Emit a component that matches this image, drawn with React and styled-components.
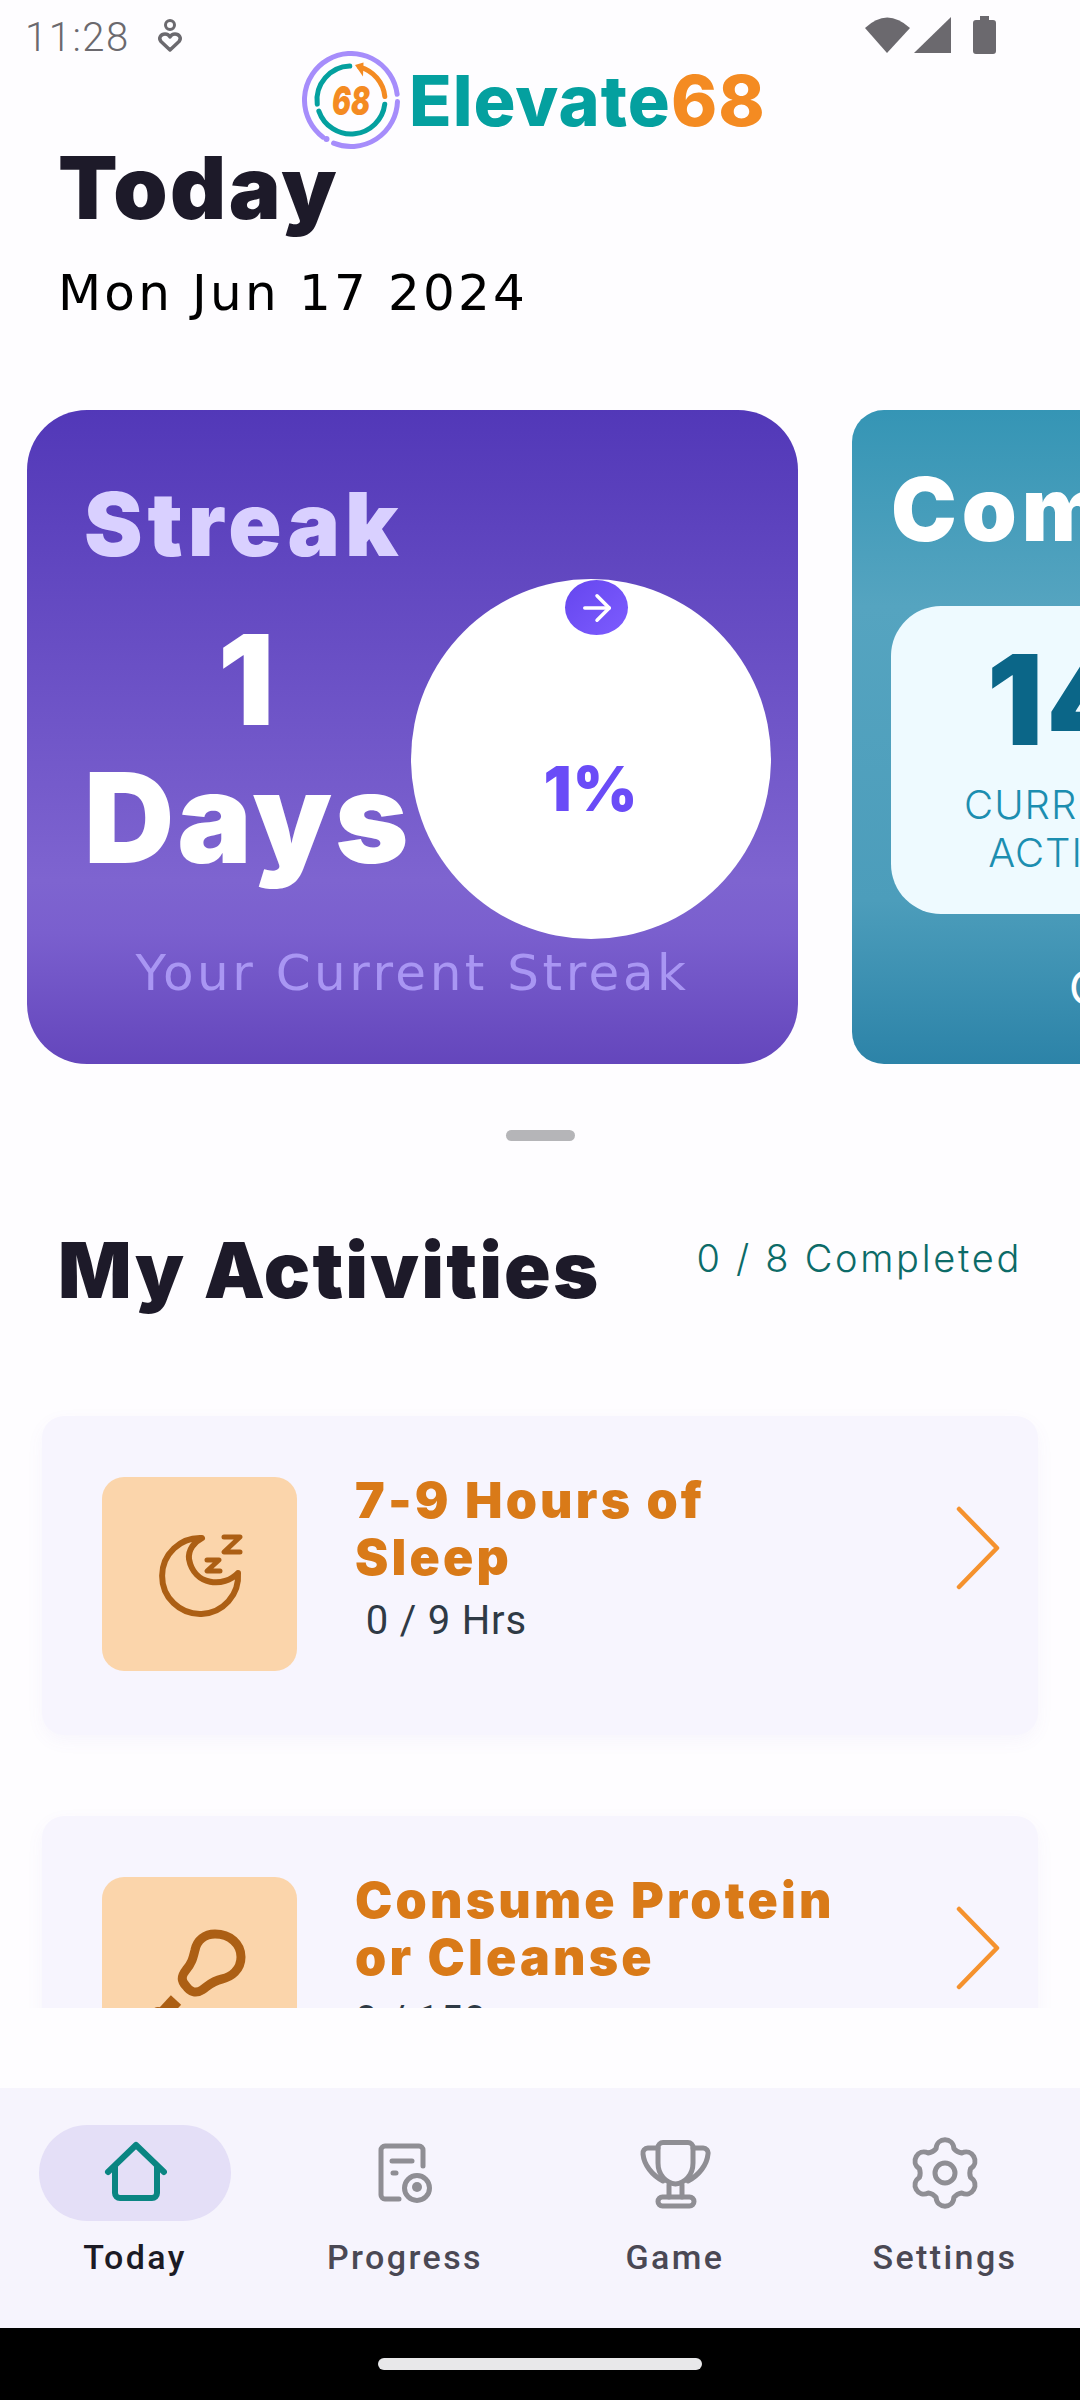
import React from 'react';
import styled, { createGlobalStyle } from 'styled-components';
import { ArrowRight } from 'lucide-react';

const GlobalStyle = createGlobalStyle`
  html, body {
    margin: 0;
    padding: 0;
    background: #fefdff;
  }
  * {
    box-sizing: border-box;
  }
`;

const Screen = styled.div`
  width: 1080px;
  height: 2400px;
  display: flex;
  flex-direction: column;
  overflow: hidden;
  background: #fefdff;
  font-family: Inter, 'Liberation Sans', sans-serif;
`;

const Main = styled.main`
  height: 2008px;
  overflow: hidden;
  flex-shrink: 0;
`;

const StatusBar = styled.div`
  height: 51px;
  display: flex;
  align-items: flex-start;
  padding: 16px 84px 0 25px;
  color: #6b696e;
`;

const Clock = styled.span`
  font-family: Roboto, sans-serif;
  font-weight: 300;
  font-size: 40px;
  line-height: 44px;
  letter-spacing: 1.5px;
  margin-right: 26px;
`;

const StatusLeftIcon = styled.svg`
  margin-top: 2px;
`;

const StatusRight = styled.div`
  margin-left: auto;
  display: flex;
  align-items: flex-start;
`;

const LogoRow = styled.div`
  height: 98px;
  display: flex;
  align-items: center;
  gap: 9px;
  padding-left: 302px;
`;

const LogoText = styled.div`
  font-size: 70px;
  line-height: 80px;
  font-weight: 800;
  letter-spacing: 1px;
  color: #04a09f;
  margin-top: 2px;

  span {
    color: #f48b22;
  }
`;

const PageHead = styled.header`
  padding-left: 58px;
  margin-bottom: 87px;
`;

const PageTitle = styled.h1`
  margin: 0;
  font-size: 87px;
  line-height: 78px;
  font-weight: 900;
  letter-spacing: 2.4px;
  color: #1d1a29;
`;

const PageDate = styled.div`
  margin-top: 36px;
  font-family: 'DejaVu Sans', sans-serif;
  font-size: 50px;
  line-height: 60px;
  font-weight: 400;
  letter-spacing: 3.2px;
  color: #000;
  white-space: nowrap;
`;

const Carousel = styled.section`
  display: flex;
  gap: 54px;
  padding-left: 27px;
  width: 1080px;
  overflow: hidden;
`;

const SlideCard = styled.div`
  flex: 0 0 771px;
  height: 654px;
  border-radius: ${(p) => p.$radius}px;
  background: ${(p) => p.$bg};
`;

const StreakCard = styled(SlideCard)`
  padding: 70px 27px 0 57px;
`;

const CompleteCard = styled(SlideCard)`
  padding: 55px 39px 0;
`;

const CardHeading = styled.h2`
  margin: 0;
  font-size: 88px;
  line-height: 88px;
  font-weight: 900;
  letter-spacing: 5px;
  color: ${(p) => p.$color};
`;

const StreakRow = styled.div`
  display: flex;
  margin-top: 11px;
`;

const DaysBlock = styled.div`
  width: 327px;
  margin-top: 32px;
  text-align: center;
  font-size: 125px;
  line-height: 138px;
  font-weight: 900;
  letter-spacing: 3px;
  color: #fff;
  white-space: nowrap;
`;

const ProgressCircle = styled.div`
  position: relative;
  width: 360px;
  height: 360px;
  flex-shrink: 0;
  border-radius: 50%;
  background: #fff;
  display: flex;
  align-items: center;
  justify-content: center;
  padding-top: 60px;
`;

const ProgressBadge = styled.div`
  position: absolute;
  top: 1px;
  left: 154px;
  width: 63px;
  height: 55px;
  border-radius: 50%;
  background: linear-gradient(135deg, #6546ee, #7d5cff);
  color: #fff;
  display: flex;
  align-items: center;
  justify-content: center;
`;

const ProgressValue = styled.div`
  font-size: 62px;
  line-height: 70px;
  font-weight: 900;
  letter-spacing: 1px;
  color: #6a4cf7;
`;

const StreakCaption = styled.div`
  margin: 4px 0 0 -30px;
  text-align: center;
  font-family: 'DejaVu Sans', sans-serif;
  font-size: 50px;
  line-height: 60px;
  letter-spacing: 3.5px;
  color: #a996f3;
  white-space: nowrap;
`;

const CountPanel = styled.div`
  margin-top: 53px;
  width: 342px;
  height: 308px;
  padding-top: 29px;
  border-radius: 50px;
  background: #eefaff;
  text-align: center;
`;

const CountValue = styled.div`
  font-size: 125px;
  line-height: 130px;
  font-weight: 900;
  letter-spacing: 3px;
  color: #0b6688;
`;

const CountLabel = styled.div`
  margin-top: 16px;
  font-size: 40px;
  line-height: 48px;
  font-weight: 300;
  letter-spacing: 1px;
  color: #1c8eb0;
`;

const CompleteCaption = styled.div`
  margin: 46px 0 0 62px;
  text-align: center;
  font-size: 48px;
  line-height: 56px;
  font-weight: 400;
  color: #fff;
  white-space: nowrap;
`;

const DragHandle = styled.div`
  width: 69px;
  height: 11px;
  margin: 66px auto 84px;
  border-radius: 6px;
  background: #b5b5b8;
`;

const SectionRow = styled.div`
  display: flex;
  justify-content: space-between;
  align-items: flex-start;
  padding: 0 58px;
  margin-bottom: 101px;
`;

const SectionTitle = styled.h2`
  margin: 0;
  font-size: 77px;
  line-height: 90px;
  font-weight: 900;
  letter-spacing: 2.2px;
  color: #1d1a29;
`;

const SectionCount = styled.div`
  margin-top: 10px;
  font-size: 38px;
  line-height: 46px;
  font-weight: 300;
  letter-spacing: 2.7px;
  color: #0c6b68;
`;

const ActivityList = styled.div`
  display: flex;
  flex-direction: column;
  gap: 81px;
  padding: 0 42px;
`;

const ActivityCard = styled.article`
  display: flex;
  height: 319px;
  padding: 61px 38px 0 60px;
  border-radius: 22px;
  background: #f7f5fe;
  box-shadow: 0 6px 18px rgba(120, 100, 200, 0.05);
`;

const IconTile = styled.div`
  flex: 0 0 195px;
  height: 194px;
  border-radius: 22px;
  background: #fbd5ab;
  display: flex;
  align-items: center;
  justify-content: center;
`;

const ActivityBody = styled.div`
  flex: 1;
  margin: -5px 0 0 58px;
`;

const ActivityTitle = styled.h3`
  margin: 0;
  max-width: 500px;
  font-size: 50px;
  line-height: 57px;
  font-weight: 900;
  letter-spacing: 3.2px;
  color: #d97a18;
`;

const ActivityMeta = styled.div`
  margin-top: 13px;
  font-family: Roboto, sans-serif;
  font-size: 40px;
  line-height: 44px;
  letter-spacing: 0.8px;
  color: #2f3a45;
  white-space: pre;
`;

const ChevronIcon = styled.svg`
  flex-shrink: 0;
  margin-top: 29px;
`;

const Gap = styled.div`
  height: 80px;
  flex-shrink: 0;
`;

const NavBar = styled.nav`
  height: 240px;
  flex-shrink: 0;
  display: grid;
  grid-template-columns: repeat(4, 270px);
  background: #f6f4fd;
`;

const NavItem = styled.div`
  display: flex;
  flex-direction: column;
  align-items: center;
  padding-top: 37px;
`;

const NavIconWrap = styled.div`
  width: 192px;
  height: 96px;
  border-radius: 48px;
  background: ${(p) => (p.$active ? '#e4dff7' : 'transparent')};
  display: flex;
  align-items: center;
  justify-content: center;
`;

const NavLabel = styled.span`
  margin-top: 16px;
  font-family: Roboto, sans-serif;
  font-size: 34px;
  line-height: 40px;
  font-weight: 500;
  letter-spacing: 2.4px;
  color: ${(p) => (p.$active ? '#1c1b25' : '#4a4854')};
`;

const GestureBar = styled.div`
  flex: 1;
  background: #000;
  display: flex;
  justify-content: center;
  padding-top: 30px;

  &::after {
    content: '';
    width: 324px;
    height: 12px;
    border-radius: 6px;
    background: #e8e8ea;
  }
`;

// angle in degrees, clockwise from the top of the circle
const polar = (r, deg, c = 49) => {
  const a = (deg * Math.PI) / 180;
  return [c + r * Math.sin(a), c - r * Math.cos(a)];
};

const arc = (r, from, to) => {
  const [x1, y1] = polar(r, from);
  const [x2, y2] = polar(r, to);
  const large = to - from > 180 ? 1 : 0;
  return `M${x1.toFixed(2)} ${y1.toFixed(2)} A${r} ${r} 0 ${large} 1 ${x2.toFixed(2)} ${y2.toFixed(2)}`;
};

const gearPath = () => {
  let d = '';
  for (let i = 0; i < 6; i++) {
    const a = 60 * i;
    const [sx, sy] = polar(26, a - 20, 36);
    const [c1x, c1y] = polar(37, a - 13, 36);
    const [c2x, c2y] = polar(37, a + 13, 36);
    const [ex, ey] = polar(26, a + 20, 36);
    const [vx, vy] = polar(24, a + 30, 36);
    const [nx, ny] = polar(26, a + 40, 36);
    d += `${i === 0 ? 'M' : 'L'}${sx.toFixed(1)} ${sy.toFixed(1)} C${c1x.toFixed(1)} ${c1y.toFixed(1)} ${c2x.toFixed(1)} ${c2y.toFixed(1)} ${ex.toFixed(1)} ${ey.toFixed(1)} Q${vx.toFixed(1)} ${vy.toFixed(1)} ${nx.toFixed(1)} ${ny.toFixed(1)} `;
  }
  return d + 'Z';
};

const LogoMark = () => (
  <svg width='98' height='98' viewBox='0 0 98 98' fill='none' strokeLinecap='round'>
    <path d={arc(46.5, 92, 202)} stroke='#a68dfb' strokeWidth='5' />
    <path d={arc(46.5, 217, 443)} stroke='#a68dfb' strokeWidth='5' />
    <circle cx='24.5' cy='88' r='3' fill='#a68dfb' />
    <path d={arc(34, 263, 358)} stroke='#04a09f' strokeWidth='5' />
    <path d={arc(34, 97, 251)} stroke='#04a09f' strokeWidth='5' />
    <path d={arc(34, 15, 84)} stroke='#f48b22' strokeWidth='5' />
    <polygon points='53,14 61.5,11.5 61,25.5' fill='#f48b22' />
    <text
      x='49'
      y='64'
      textAnchor='middle'
      fontFamily='Inter, sans-serif'
      fontSize='40'
      fontWeight='900'
      fontStyle='italic'
      fill='#f48b22'
      textLength='38'
      lengthAdjust='spacingAndGlyphs'
    >
      68
    </text>
  </svg>
);

const MoonIcon = () => (
  <svg width='96' height='96' viewBox='-2 0 96 96' fill='none' stroke='#ac5f14' strokeLinecap='round' strokeLinejoin='round'>
    <path
      d='M48 12 A38 38 0 1 0 84 47 C70 62 40 60 35 33 C34 24 40 16 48 12 Z'
      strokeWidth='6'
    />
    <path d='M70 11 H86 L70 26 H86' strokeWidth='5' />
    <path d='M53 34 H65 L53 45 H66' strokeWidth='5' />
  </svg>
);

const DrumstickIcon = () => (
  <svg width='96' height='96' viewBox='0 0 96 96' fill='none' stroke='#ac5f14' strokeLinecap='round' strokeLinejoin='round'>
    <path
      d='M63 8 C78 8 89 18 89 31 C89 44 79 51 70 53 C60 55 56 60 50 64 C44 68 38 66 34 60 C28 54 30 49 34 44 C40 37 41 32 43 24 C45 14 53 8 63 8 Z'
      strokeWidth='9'
    />
    <path d='M24 74 L12 87' strokeWidth='14' strokeLinecap='butt' />
    <circle cx='6' cy='88' r='7' fill='#ac5f14' stroke='none' />
  </svg>
);

const HomeIcon = () => (
  <svg width='64' height='64' viewBox='0 0 64 64' fill='none' stroke='#0a8582' strokeWidth='6' strokeLinecap='round' strokeLinejoin='round'>
    <path d='M5 31 L33 4 L61 31' />
    <path d='M12 26 V52 a5 5 0 0 0 5 5 H49 a5 5 0 0 0 5 -5 V26' />
  </svg>
);

const ProgressIcon = () => (
  <svg width='64' height='64' viewBox='0 0 64 64' fill='none' stroke='#8f8e94' strokeWidth='5' strokeLinecap='round'>
    <path d='M26 58 H12 a4 4 0 0 1 -4 -4 V9 a4 4 0 0 1 4 -4 H46 a4 4 0 0 1 4 4 V25' />
    <path d='M19 20 H39' />
    <path d='M20 32 H23' />
    <circle cx='44' cy='47' r='12.5' />
    <circle cx='44' cy='46' r='5' fill='#8f8e94' stroke='none' />
  </svg>
);

const TrophyIcon = () => (
  <svg width='72' height='72' viewBox='0 0 72 72' fill='none' stroke='#8f8e94' strokeWidth='5' strokeLinecap='round' strokeLinejoin='round'>
    <path d='M24 5.5 H49 a5 5 0 0 1 5 5 V26 C54 38 46 46 36.5 47 C27 46 19 38 19 26 V10.5 a5 5 0 0 1 5 -5 Z' />
    <path d='M19 11 H9 a5 5 0 0 0 -5 6 C5 28 13 38 24 44' />
    <path d='M54 11 H64 a5 5 0 0 1 5 6 C68 28 60 38 49 44' />
    <path d='M30 48 V60 M43 48 V60' />
    <rect x='19' y='60' width='36' height='9' rx='4.5' />
  </svg>
);

const GearIcon = () => (
  <svg width='72' height='72' viewBox='0 0 72 72' fill='none' stroke='#8f8e94' strokeWidth='5' strokeLinejoin='round'>
    <path d={gearPath()} />
    <circle cx='36' cy='36' r='10' />
  </svg>
);

const Chevron = () => (
  <ChevronIcon width='44' height='84' viewBox='0 0 44 84' fill='none' stroke='#f5922e' strokeWidth='4.5' strokeLinecap='round' strokeLinejoin='round'>
    <path d='M3 3 L41 42 L3 81' />
  </ChevronIcon>
);

const activities = [
  { id: 'sleep', title: '7-9 Hours of Sleep', meta: ' 0 / 9 Hrs', icon: <MoonIcon /> },
  { id: 'protein', title: 'Consume Protein or Cleanse', meta: '0 / 150', icon: <DrumstickIcon /> },
];

const tabs = [
  { id: 'today', label: 'Today', icon: <HomeIcon />, active: true },
  { id: 'progress', label: 'Progress', icon: <ProgressIcon /> },
  { id: 'game', label: 'Game', icon: <TrophyIcon /> },
  { id: 'settings', label: 'Settings', icon: <GearIcon /> },
];

export default function App() {
  return (
    <Screen>
      <GlobalStyle />
      <Main>
        <StatusBar>
          <Clock>11:28</Clock>
          <StatusLeftIcon width='28' height='36' viewBox='0 0 28 36' fill='none' stroke='currentColor'>
            <circle cx='14' cy='7' r='4.5' strokeWidth='3' />
            <path
              d='M14 32 L5 23.5 C2 20 5 16 9 16 C11 16 13 17 14 19 C15 17 17 16 19 16 C23 16 26 20 23 23.5 Z'
              strokeWidth='3.5'
              strokeLinejoin='round'
            />
          </StatusLeftIcon>
          <StatusRight>
            <svg width='49' height='38' viewBox='0 0 49 38' fill='currentColor'>
              <path d='M0 12 Q22 -9 45 12 L22 37 Z' />
            </svg>
            <svg width='59' height='38' viewBox='0 0 59 38' fill='currentColor'>
              <path d='M0 37 L37 1 V37 Z' />
            </svg>
            <svg width='23' height='39' viewBox='0 0 23 39' fill='currentColor'>
              <path d='M7 0 H16 V4 H20 a3 3 0 0 1 3 3 V35 a3 3 0 0 1 -3 3 H3 a3 3 0 0 1 -3 -3 V7 a3 3 0 0 1 3 -3 H7 Z' />
            </svg>
          </StatusRight>
        </StatusBar>

        <LogoRow>
          <LogoMark />
          <LogoText>
            Elevate<span>68</span>
          </LogoText>
        </LogoRow>

        <PageHead>
          <PageTitle>Today</PageTitle>
          <PageDate>Mon Jun 17 2024</PageDate>
        </PageHead>

        <Carousel>
          <StreakCard $radius={60} $bg='linear-gradient(180deg, #5238b8 0%, #7e64d0 72%, #7a5fce 80%, #6446bc 100%)'>
            <CardHeading $color='#d9d0ff'>Streak</CardHeading>
            <StreakRow>
              <DaysBlock>
                1
                <br />
                Days
              </DaysBlock>
              <ProgressCircle>
                <ProgressBadge>
                  <ArrowRight size={42} strokeWidth={2} />
                </ProgressBadge>
                <ProgressValue>1%</ProgressValue>
              </ProgressCircle>
            </StreakRow>
            <StreakCaption>Your Current Streak</StreakCaption>
          </StreakCard>

          <CompleteCard $radius={32} $bg='linear-gradient(180deg, #3595b5 0%, #55a4c0 30%, #4c9dbb 75%, #2c83a8 100%)'>
            <CardHeading $color='#fff'>Completed</CardHeading>
            <CountPanel>
              <CountValue>14</CountValue>
              <CountLabel>
                CURRENT
                <br />
                ACTIVE
              </CountLabel>
            </CountPanel>
            <CompleteCaption>Completed Today</CompleteCaption>
          </CompleteCard>
        </Carousel>

        <DragHandle />

        <SectionRow>
          <SectionTitle>My Activities</SectionTitle>
          <SectionCount>0 / 8 Completed</SectionCount>
        </SectionRow>

        <ActivityList>
          {activities.map((a) => (
            <ActivityCard key={a.id}>
              <IconTile>{a.icon}</IconTile>
              <ActivityBody>
                <ActivityTitle>{a.title}</ActivityTitle>
                <ActivityMeta>{a.meta}</ActivityMeta>
              </ActivityBody>
              <Chevron />
            </ActivityCard>
          ))}
        </ActivityList>
      </Main>

      <Gap />

      <NavBar>
        {tabs.map((t) => (
          <NavItem key={t.id}>
            <NavIconWrap $active={t.active}>{t.icon}</NavIconWrap>
            <NavLabel $active={t.active}>{t.label}</NavLabel>
          </NavItem>
        ))}
      </NavBar>

      <GestureBar />
    </Screen>
  );
}
